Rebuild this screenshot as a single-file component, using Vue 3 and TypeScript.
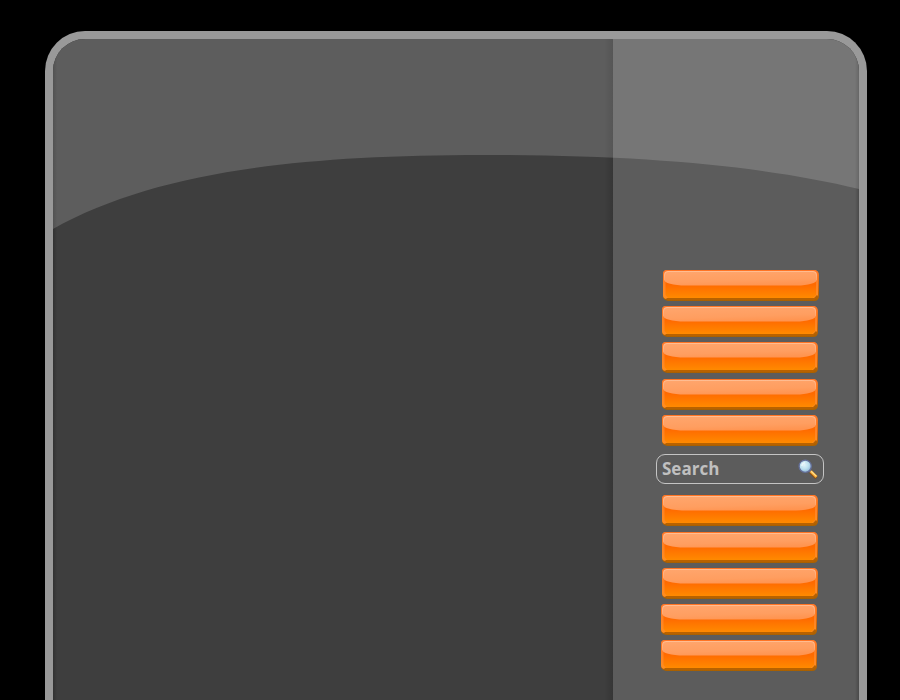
<script setup lang="ts">
import { ref } from 'vue'

interface MenuButton {
  id: number
  gap: number
  shift: number
}

const upper: MenuButton[] = [
  { id: 1, gap: 0, shift: 50 },
  { id: 2, gap: 5, shift: 49 },
  { id: 3, gap: 5, shift: 49 },
  { id: 4, gap: 6, shift: 49 },
  { id: 5, gap: 5, shift: 49 },
]

const lower: MenuButton[] = [
  { id: 6, gap: 0, shift: 49 },
  { id: 7, gap: 6, shift: 49 },
  { id: 8, gap: 5, shift: 49 },
  { id: 9, gap: 5, shift: 48 },
  { id: 10, gap: 5, shift: 48 },
]

const groups = [upper, lower]
const query = ref('')
</script>

<template>
  <div class="page">
    <svg class="defs" width="0" height="0">
      <defs>
        <linearGradient id="face" x1="0" y1="0" x2="0" y2="1">
          <stop offset="0" stop-color="#ff6a00" />
          <stop offset="0.5" stop-color="#ff6a00" />
          <stop offset="1" stop-color="#ff8a00" />
        </linearGradient>
        <linearGradient id="gloss" gradientUnits="userSpaceOnUse" x1="76" y1="0" x2="76.5" y2="16">
          <stop offset="0" stop-color="#ffa56c" />
          <stop offset="0.65" stop-color="#ff9e60" />
          <stop offset="1" stop-color="#ff9450" />
        </linearGradient>
        <linearGradient id="side" x1="0" y1="0" x2="0" y2="1">
          <stop offset="0" stop-color="#f97a2a" />
          <stop offset="0.5" stop-color="#d96a10" />
          <stop offset="1" stop-color="#a86000" />
        </linearGradient>
        <linearGradient id="rim" x1="0" y1="0" x2="0" y2="1">
          <stop offset="0" stop-color="#ff7424" />
          <stop offset="1" stop-color="#ff8e20" />
        </linearGradient>
        <linearGradient id="glint" x1="0" y1="0" x2="0" y2="1">
          <stop offset="0" stop-color="#ffd0b0" stop-opacity="0.55" />
          <stop offset="1" stop-color="#ffd0b0" stop-opacity="0.15" />
        </linearGradient>
        <symbol id="bar" viewBox="0 0 156 31">
          <path d="M4 0H152Q156 1 156 5V26Q156 31 151 31H5Q0 30 0 26V4Q0 0 4 0Z" fill="url(#side)" />
          <path d="M4 0H151Q155 0 155 4V25L151 29H4Q0 29 0 25V4Q0 0 4 0Z" fill="url(#rim)" />
          <path d="M3 28H151L154 25V27L151 30H5Z" fill="#b86200" />
          <path d="M4 1H150Q153 1 153 4V25L150 28H5L2.5 25V4Q2.5 1 4 1Z" fill="url(#face)" />
          <path d="M1 5Q1 1 5 1H150Q154 1 154 5V9.5C154 13 145 15.5 134 15.5H23C10 15.5 1 13 1 9.5Z" fill="url(#gloss)" />
          <path d="M1.5 10V5Q1.5 1.5 5 1.5H150Q153.5 1.5 153.5 5V10" fill="none" stroke="url(#glint)" />
        </symbol>
      </defs>
    </svg>

    <main class="frame">
      <section class="content"></section>
      <aside class="sidebar">
        <template v-for="(group, index) in groups" :key="index">
          <nav class="menu">
            <button
              v-for="item in group"
              :key="item.id"
              class="item"
              type="button"
              :style="{ marginTop: item.gap + 'px', marginLeft: item.shift + 'px' }"
            >
              <svg width="156" height="31"><use href="#bar" /></svg>
            </button>
          </nav>
          <form v-if="index === 0" class="search" @submit.prevent>
            <input v-model="query" class="field" type="text" placeholder="Search" />
            <svg class="lens" width="20" height="20" viewBox="0 0 20 20">
              <defs>
                <radialGradient id="glass" cx="0.42" cy="0.38" r="0.65">
                  <stop offset="0" stop-color="#e4f6fa" />
                  <stop offset="0.55" stop-color="#bce0ee" />
                  <stop offset="1" stop-color="#8fb6d8" />
                </radialGradient>
              </defs>
              <path d="M11 11L14 14" stroke="#777493" stroke-width="2" />
              <path d="M12.4 13L18.4 19" stroke="#81501f" stroke-width="3.4" />
              <path d="M12.7 12.3L18.5 18.1" stroke="#f5a22d" stroke-width="2.8" />
              <path d="M13.1 12.2L18.4 17.4" stroke="#ffe391" stroke-width="1.2" />
              <circle cx="7.2" cy="7.2" r="6.1" fill="url(#glass)" stroke="#65709a" stroke-width="1.3" />
              <path d="M3.8 7Q4 4 7 3.6" fill="none" stroke="#fff" stroke-opacity="0.6" stroke-width="1.3" />
            </svg>
          </form>
        </template>
      </aside>
      <svg class="shine" width="806" height="190" viewBox="0 0 806 190">
        <path
          d="M0 0H806V150C710 127 590 116 430 116C240 116 100 134 0 190Z"
          fill="#fff"
          fill-opacity="0.16"
        />
      </svg>
    </main>
  </div>
</template>

<style>
html,
body {
  margin: 0;
  background: #000;
}
</style>

<style scoped>
.page {
  box-sizing: border-box;
  width: 900px;
  height: 700px;
  padding: 31px 33px 0 45px;
  overflow: hidden;
  background: #000;
}

.defs {
  position: absolute;
}

.frame {
  position: relative;
  box-sizing: border-box;
  display: flex;
  width: 822px;
  height: 669px;
  overflow: hidden;
  border: 8px solid #999;
  border-bottom: 0;
  border-radius: 40px 40px 0 0;
  background: #3e3e3e;
}

.content {
  width: 560px;
  background:
    linear-gradient(to right, rgba(0, 0, 0, 0.2), transparent 4px),
    linear-gradient(to left, rgba(0, 0, 0, 0.13), transparent 9px),
    #3e3e3e;
}

.sidebar {
  box-sizing: border-box;
  width: 246px;
  padding-top: 231px;
  background:
    linear-gradient(to left, rgba(0, 0, 0, 0.2), transparent 4px),
    #5c5c5c;
}

.shine {
  position: absolute;
  top: 0;
  left: 0;
  pointer-events: none;
}

.menu {
  display: flex;
  flex-direction: column;
  align-items: flex-start;
}

.item {
  display: block;
  width: 156px;
  height: 31px;
  padding: 0;
  border: 0;
  background: none;
  cursor: pointer;
}

.item svg {
  display: block;
}

.search {
  box-sizing: border-box;
  display: flex;
  align-items: center;
  width: 168px;
  height: 30px;
  margin: 8px 0 11px 43px;
  padding: 0 5px 0 5px;
  border: 1px solid #c4c4c4;
  border-radius: 9px;
}

.field {
  flex: 1;
  min-width: 0;
  height: 26px;
  padding: 0 0 2px;
  box-sizing: border-box;
  border: 0;
  outline: 0;
  background: transparent;
  color: #c0c0c0;
  font: 700 17px 'Open Sans', 'Noto Sans', sans-serif;
}

.field::placeholder {
  color: #c0c0c0;
  opacity: 1;
}

.lens {
  flex: none;
}
</style>
